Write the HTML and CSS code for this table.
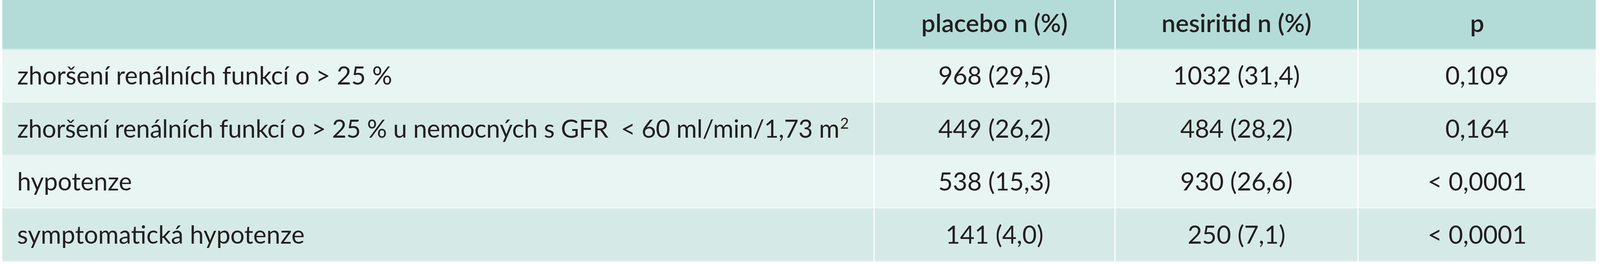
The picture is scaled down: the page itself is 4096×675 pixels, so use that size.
FILE: index.html
```html
<!DOCTYPE html>
<html lang="cs">
<head>
<meta charset="utf-8">
<title>Tabulka</title>
<link rel="stylesheet" href="styles.css">
</head>
<body>
<div class="table">
  <div class="cell head label"></div>
  <div class="cell head num">placebo n (%)</div>
  <div class="cell head num">nesiritid n (%)</div>
  <div class="cell head num last">p</div>

  <div class="cell odd label">zhoršení renálních funkcí o &gt; 25 %</div>
  <div class="cell odd num">968 (29,5)</div>
  <div class="cell odd num">1032 (31,4)</div>
  <div class="cell odd num last">0,109</div>

  <div class="cell even label"><span class="narrow">zhoršení renálních funkcí o &gt; 25 % u nemocných s GFR &nbsp;&lt; 60 ml/min/1,73 m<span class="sup">2</span></span></div>
  <div class="cell even num">449 (26,2)</div>
  <div class="cell even num">484 (28,2)</div>
  <div class="cell even num last">0,164</div>

  <div class="cell odd label">hypotenze</div>
  <div class="cell odd num">538 (15,3)</div>
  <div class="cell odd num">930 (26,6)</div>
  <div class="cell odd num last">&lt; 0,0001</div>

  <div class="cell even label">symptomatická hypotenze</div>
  <div class="cell even num">141 (4,0)</div>
  <div class="cell even num">250 (7,1)</div>
  <div class="cell even num last">&lt; 0,0001</div>
</div>
</body>
</html>
```
FILE: styles.css
```css
html, body {
  margin: 0;
  padding: 0;
  background: #ffffff;
}

body {
  font-family: Lato, "Open Sans", "Liberation Sans", sans-serif;
  color: #231f20;
}

.table {
  margin-left: 6px;
  width: 4079px;
  display: grid;
  grid-template-columns: 2233px 617px 622px 607px;
  grid-template-rows: 126.5px repeat(4, 135.5px);
}

.cell {
  box-sizing: border-box;
  display: flex;
  align-items: center;
  font-size: 64px;
  line-height: 1.2;
  white-space: nowrap;
  border-right: 3px solid #ffffff;
  border-bottom: 3.5px solid rgba(255, 255, 255, 0.35);
}

.cell.last {
  border-right: none;
}

.label {
  padding-left: 38px;
}

.narrow {
  letter-spacing: -0.4px;
}

.num {
  justify-content: center;
}

.head {
  background: #b3dcd8;
  font-weight: 600;
  padding-bottom: 6px;
}

.odd {
  background: #e8f5f3;
}

.even {
  background: #d5eae7;
}

.sup {
  font-size: 0.6em;
  position: relative;
  top: -0.6em;
  margin-left: 2px;
}
```
